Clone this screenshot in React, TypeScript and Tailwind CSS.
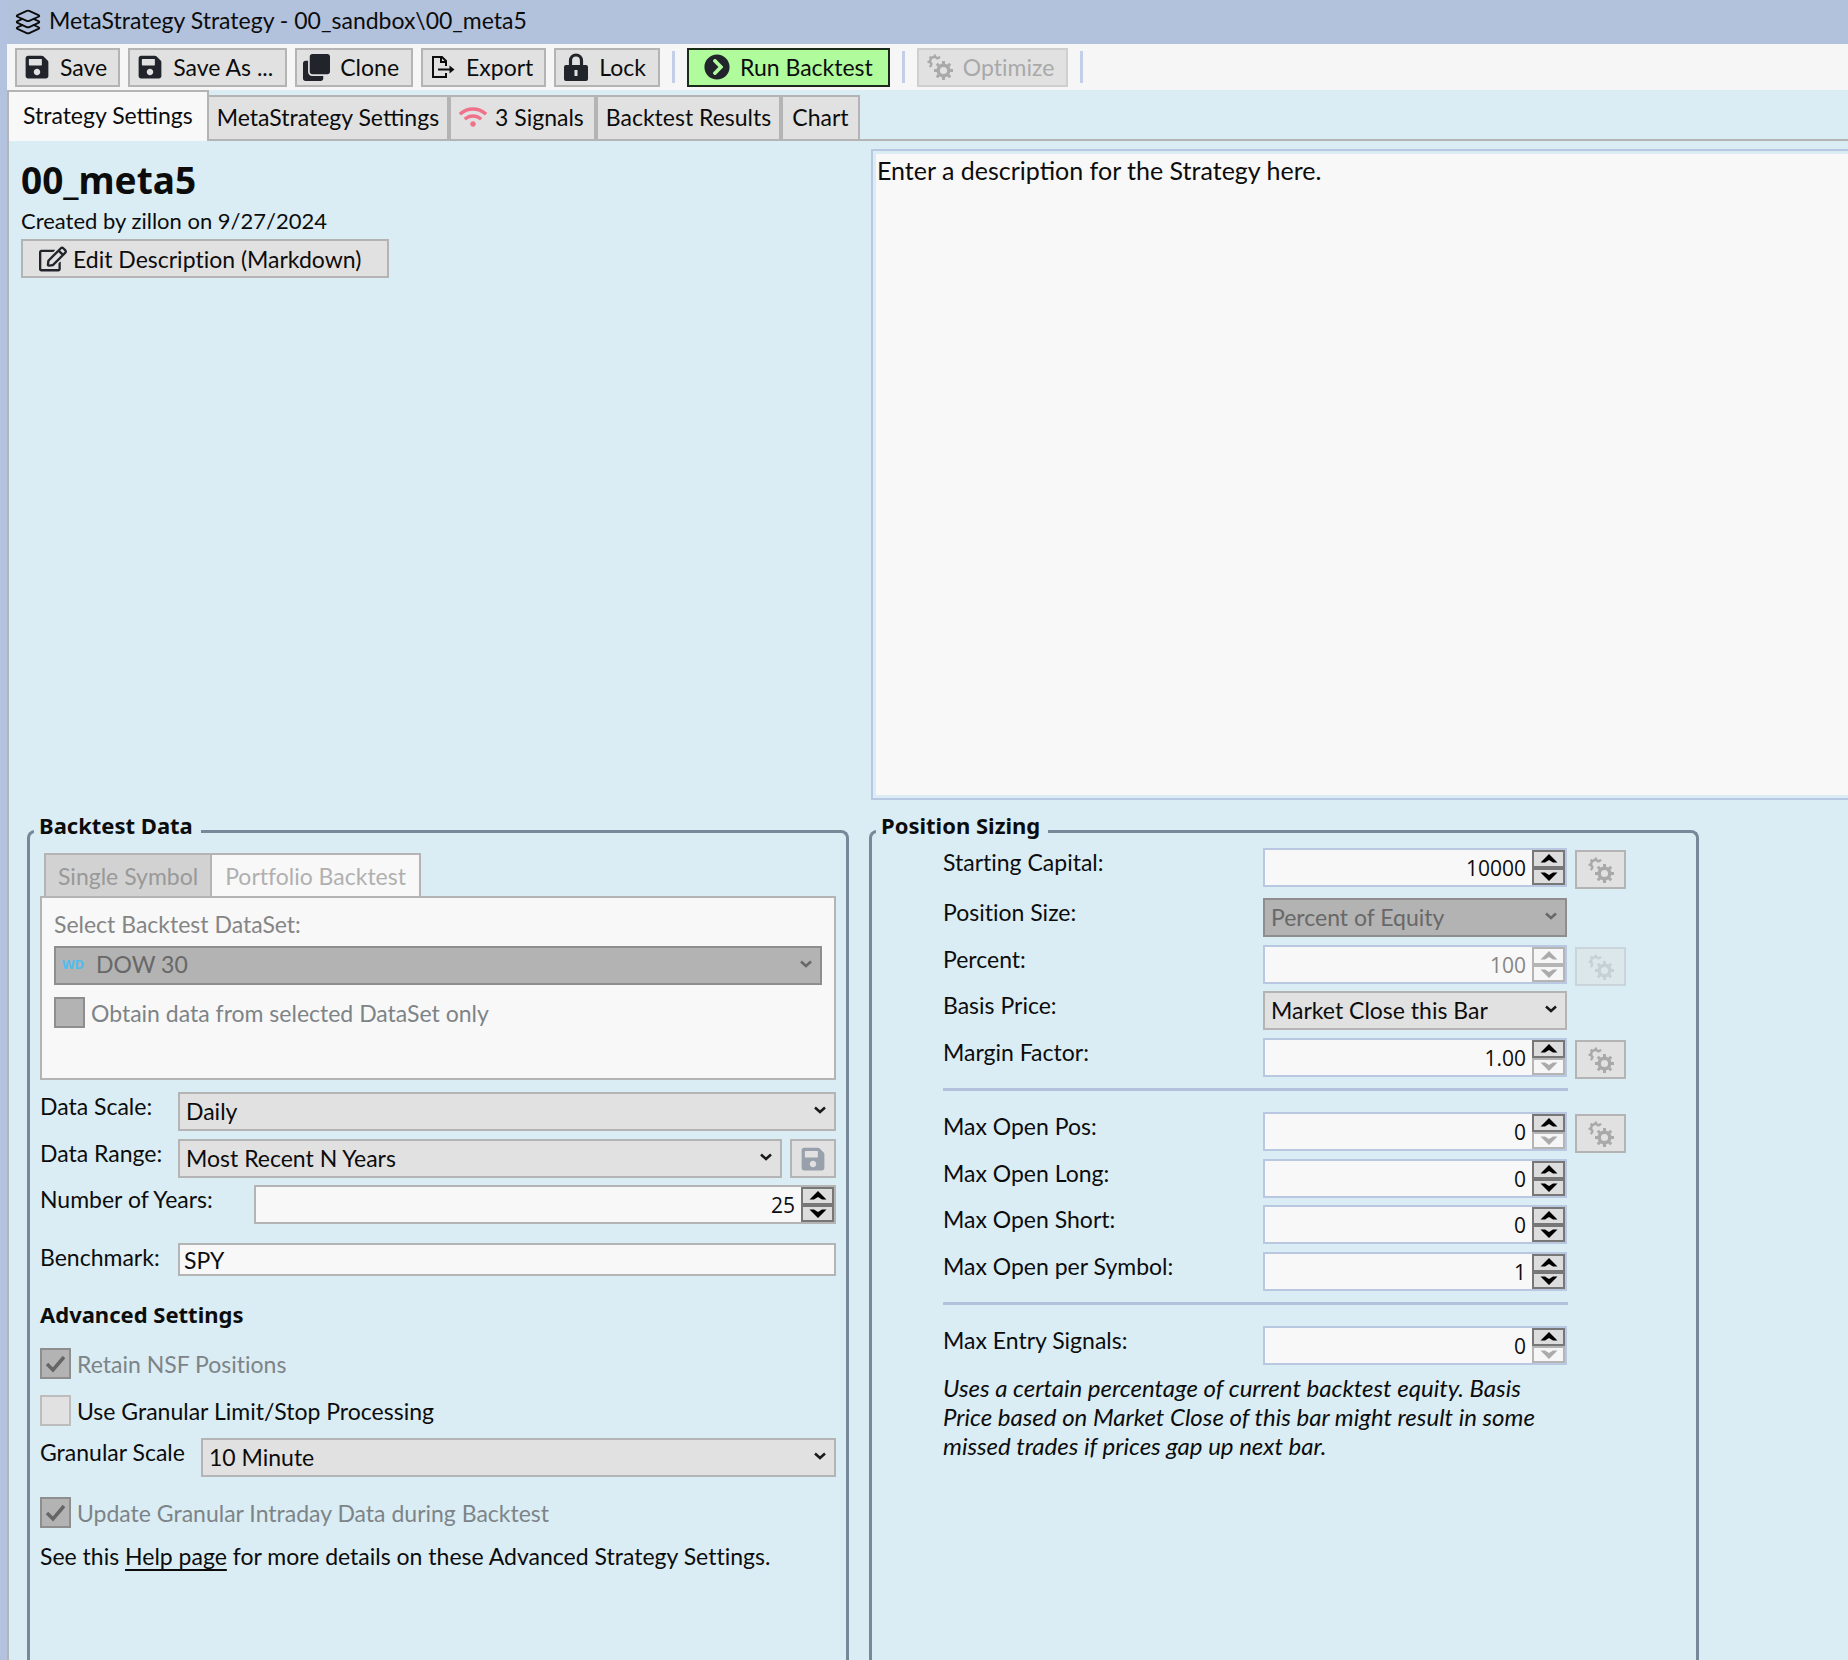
import React, { useId, useState } from "react";
import { FaSave, FaClone, FaChevronCircleRight, FaWifi, FaRegEdit } from "react-icons/fa";
import { IoLayersOutline } from "react-icons/io5";

function ExportIcon() {
  return (
    <svg viewBox="0 0 24 24" className="h-6 w-6" fill="none" stroke="currentColor" strokeWidth="2" aria-hidden="true">
      <path d="M15 18v4H2V2h9l4 4v5" />
      <path d="M10 2v5h5" />
      <path d="M7 14.500h13" />
      <path d="M18.500 10.500v8l5-4z" fill="currentColor" stroke="none" />
    </svg>
  );
}

function LockIcon() {
  return (
    <svg viewBox="0 0 24 28" className="h-7 w-6 text-[#21252b]" aria-hidden="true">
      <path d="M6.500 13V7.500a5.500 5.500 0 0 1 11 0V13" fill="none" stroke="currentColor" strokeWidth="3.200" />
      <path
        d="M2 12h20a2 2 0 0 1 2 2v12a2 2 0 0 1-2 2H2a2 2 0 0 1-2-2V14a2 2 0 0 1 2-2zm8.500 5v6h3v-6z"
        fill="currentColor"
        fillRule="evenodd"
      />
    </svg>
  );
}

const TEETH = [0, 45, 90, 135, 180, 225, 270, 315];

function GearsIcon() {
  return (
    <svg viewBox="0 0 26 26" className="h-[26px] w-[26px]" fill="none" stroke="currentColor" aria-hidden="true">
      <circle cx="16.500" cy="16.500" r="5.300" strokeWidth="3.400" />
      {TEETH.map((angle) => (
        <path key={angle} d="M16.500 10.500V7" strokeWidth="3" transform={`rotate(${angle} 16.500 16.500)`} />
      ))}
      <path d="M5.200 10.800A4.200 4.200 0 1 1 11 5.200" strokeWidth="2.600" />
      {[-90, -135, -45, 0, 45].map((angle) => (
        <path key={angle} d="M7.800 3.500V.5" strokeWidth="2.200" transform={`rotate(${angle} 7.800 7.800)`} />
      ))}
    </svg>
  );
}

function Chevron() {
  return (
    <svg viewBox="0 0 12 8" className="h-2 w-3" fill="none" stroke="currentColor" strokeWidth="2.500" aria-hidden="true">
      <path d="M1 1.500L6 6l5-4.500" />
    </svg>
  );
}

function ToolButton({ children, className, disabled }: { children: React.ReactNode; className: string; disabled?: boolean }) {
  return (
    <button type="button" disabled={disabled} className={`flex h-[39px] shrink-0 items-center border-2 ${className}`}>
      {children}
    </button>
  );
}

const plain = "border-[#b4b4b4] bg-[#e1e1e1]";

function Divider() {
  return <div className="mx-3 h-8 w-[3px] shrink-0 bg-[#c3cfe6]" />;
}

function Select({ id, value, disabled, icon }: { id: string; value: string; disabled?: boolean; icon?: React.ReactNode }) {
  return (
    <div className="relative min-w-0 flex-1">
      {icon && <span className="pointer-events-none absolute left-2 top-0 flex h-[36px] items-center">{icon}</span>}
      <select
        id={id}
        disabled={disabled}
        defaultValue={value}
        className={`block h-[39px] w-full appearance-none border-2 pr-8 opacity-100 ${icon ? "pb-1 pl-10" : "pb-0.5 pl-1.5"} ${
          disabled ? "border-[#8e8e8e] bg-[#b3b3b3] text-[#686868]" : "border-[#b4b4b4] bg-[#e1e1e1] text-[#0c0c0c]"
        }`}
      >
        <option>{value}</option>
      </select>
      <span
        className={`pointer-events-none absolute right-2.5 top-0 flex h-[36px] items-center ${
          disabled ? "text-[#686868]" : "text-[#1a1a1a]"
        }`}
      >
        <Chevron />
      </span>
    </div>
  );
}

function SpinButton({ up, off, label, onClick }: { up?: boolean; off?: boolean; label: string; onClick: () => void }) {
  return (
    <button
      type="button"
      aria-label={label}
      disabled={off}
      onClick={onClick}
      className={`flex min-h-0 flex-1 items-center justify-center border-2 ${
        off ? "border-[#b5b5b5] bg-[#f6f6f6] text-[#ababab]" : "border-[#777777] bg-[#dddddd] text-black"
      }`}
    >
      <svg viewBox="0 0 18 9" className="h-[9px] w-[18px]" fill="currentColor" aria-hidden="true">
        {up ? <path d="M9 0L17.500 8.500H13L9 6 5 8.500H.5z" /> : <path d="M9 9L17.500 .5H13L9 3 5 .5H.5z" />}
      </svg>
    </button>
  );
}

type SpinnerProps = { id: string; value: string; tone?: "blue" | "gray"; noUp?: boolean; noDown?: boolean };

function Spinner({ id, value, tone = "blue", noUp, noDown }: SpinnerProps) {
  const [text, setText] = useState(value);
  const step = (delta: number) => setText((t) => String(Number(t) + delta));
  const disabled = noUp && noDown;
  return (
    <div
      className={`flex h-[39px] min-w-0 flex-1 border-2 bg-[#f8f8f8] ${tone === "blue" ? "border-[#b9c7e1]" : "border-[#b4b4b4]"}`}
    >
      <input
        id={id}
        value={text}
        disabled={disabled}
        onChange={(e) => setText(e.target.value)}
        inputMode="decimal"
        className={`min-w-0 flex-1 pr-1.5 text-right font-['Open_Sans',sans-serif] text-[21px] ${
          disabled ? "text-[#868686]" : "text-[#0c0c0c]"
        }`}
      />
      <div className="flex w-[33px] flex-col">
        <SpinButton up off={noUp} label="Increase" onClick={() => step(1)} />
        <SpinButton off={noDown} label="Decrease" onClick={() => step(-1)} />
      </div>
    </div>
  );
}

function GroupBox({ title, className, children }: { title: string; className: string; children: React.ReactNode }) {
  return (
    <fieldset className="min-w-0 rounded-t-lg border-[3px] border-b-0 border-[#778899]">
      <legend className="ml-1 pb-[13px] pl-[5px] pr-2 font-['Noto_Sans',sans-serif] text-[22px] font-bold leading-5">{title}</legend>
      <div className={className}>{children}</div>
    </fieldset>
  );
}

function CheckRow({ label, checked, disabled, className }: { label: string; checked?: boolean; disabled?: boolean; className: string }) {
  const id = useId();
  return (
    <div className={`flex items-center gap-1.5 ${className}`}>
      <div className="relative h-[31px] w-[31px] shrink-0">
        <input
          id={id}
          type="checkbox"
          defaultChecked={checked}
          disabled={disabled}
          className={`peer block h-[31px] w-[31px] appearance-none border-2 ${
            disabled ? "border-[#8e8e8e] bg-[#b3b3b3]" : "border-[#bdbdbd] bg-[#e1e1e1]"
          }`}
        />
        <svg
          viewBox="0 0 31 31"
          className="pointer-events-none absolute inset-0 hidden text-[#666666] peer-checked:block"
          fill="none"
          stroke="currentColor"
          strokeWidth="3.500"
          aria-hidden="true"
        >
          <path d="M7 16l6 6L24 9" />
        </svg>
      </div>
      <label htmlFor={id} className={disabled ? "text-[#7d8487]" : ""}>
        {label}
      </label>
    </div>
  );
}

function SizingRow({
  label,
  className = "h-[47px]",
  gear,
  children,
}: {
  label: string;
  className?: string;
  gear?: "on" | "faded";
  children: (id: string) => React.ReactNode;
}) {
  const id = useId();
  return (
    <div className={`flex items-start ${className}`}>
      <label htmlFor={id} className="w-[320px] shrink-0">
        {label}
      </label>
      {children(id)}
      <div className="ml-2 w-[51px] shrink-0 pt-0.5">
        {gear && (
          <button
            type="button"
            disabled
            aria-label={`Optimize ${label}`}
            className={`flex h-[39px] w-[51px] items-center justify-center border-2 border-[#b4b4b4] bg-[#e1e1e1] text-[#a9a9a9] ${
              gear === "faded" ? "opacity-40" : ""
            }`}
          >
            <GearsIcon />
          </button>
        )}
      </div>
    </div>
  );
}

function Rule() {
  return <hr className="mr-[58px] h-[3px] border-0 bg-[#b3c1dd]" />;
}

const tab = "flex h-[44px] items-center border-2 border-b-0 border-[#b4b4b4] bg-[#e1e1e1] pb-0.5";

export default function App() {
  return (
    <div className="flex min-h-screen flex-col border-l-[7px] border-[#b3c3df] bg-[#daecf4] font-['Lato','Noto_Sans',sans-serif] text-[23px] leading-7 text-[#0c0c0c] [font-variant-ligatures:none]">
      <header className="flex h-[44px] items-center bg-[#b2c2dc] pl-1.5">
        <IoLayersOutline className="h-[30px] w-[30px]" />
        <h1 className="ml-1.5 pb-1">MetaStrategy Strategy - 00_sandbox\00_meta5</h1>
      </header>

      <div className="flex h-[46px] items-center bg-[#f6f6f6] pl-2">
        <div className="flex gap-2">
          <ToolButton className={`${plain} gap-[11px] pl-2 pr-[11px]`}>
            <FaSave className="h-[26px] w-6 text-[#21252b]" />
            Save
          </ToolButton>
          <ToolButton className={`${plain} gap-[11px] pl-2 pr-3`}>
            <FaSave className="h-[26px] w-6 text-[#21252b]" />
            Save As ...
          </ToolButton>
          <ToolButton className={`${plain} gap-2.5 pl-1.5 pr-3`}>
            <FaClone className="h-[27px] w-[27px] text-[#21252b]" />
            Clone
          </ToolButton>
          <ToolButton className={`${plain} gap-[11px] pl-2 pr-[11px]`}>
            <ExportIcon />
            Export
          </ToolButton>
          <ToolButton className={`${plain} gap-[11px] pl-2 pr-3`}>
            <LockIcon />
            Lock
          </ToolButton>
        </div>
        <Divider />
        <ToolButton className="gap-2.5 border-[#1c2a1c] bg-[#b0fb9c] px-[15px]">
          <FaChevronCircleRight className="h-[26px] w-[26px] text-[#21252b]" />
          Run Backtest
        </ToolButton>
        <Divider />
        <ToolButton disabled className="gap-2.5 border-[#cfcfcf] bg-[#e1e1e1] pl-2 pr-3 text-[#a9a9a9]">
          <GearsIcon />
          Optimize
        </ToolButton>
        <Divider />
      </div>

      <nav role="tablist" className="flex h-[51px] items-end border-b-2 border-[#b4b4b4]">
        <button
          type="button"
          role="tab"
          aria-selected="true"
          className="-mb-0.5 flex h-[51px] items-center border-2 border-b-0 border-[#b4b4b4] bg-[#f8f8f8] px-3.5 pb-1 [font-variant-ligatures:normal]"
        >
          Strategy Settings
        </button>
        <button type="button" role="tab" aria-selected="false" className={`${tab} -ml-0.5 px-2 [font-variant-ligatures:normal]`}>
          MetaStrategy Settings
        </button>
        <button type="button" role="tab" aria-selected="false" className={`${tab} gap-2 pl-2 pr-2.5`}>
          <FaWifi className="h-7 w-7 text-[#f0728a]" />3 Signals
        </button>
        <button type="button" role="tab" aria-selected="false" className={`${tab} px-2`}>
          Backtest Results
        </button>
        <button type="button" role="tab" aria-selected="false" className={`${tab} px-[9px]`}>
          Chart
        </button>
      </nav>

      <main className="flex flex-1 flex-col border-l-2 border-[#b4b4b4]">
        <div className="grid grid-cols-[822fr_979fr] gap-x-5 pl-[18px] pt-2">
          <section className="-ml-1.5 pt-2">
            <h2 className="font-['Noto_Sans',sans-serif] text-[37px] font-bold leading-[46px]">00_meta5</h2>
            <p className="pb-1 pt-1 text-[22px]">Created by zillon on 9/27/2024</p>
            <button type="button" className={`${plain} flex h-[39px] items-center gap-1.5 border-2 pl-4 pr-[26px]`}>
              <FaRegEdit className="h-7 w-7 text-[#21252b]" />
              Edit Description (Markdown)
            </button>
          </section>
          <div className="ml-0.5 flex min-h-[651px] border-2 border-r-0 border-[#b8c8e2] p-[3px] pr-0">
            <textarea
              aria-label="Strategy description"
              defaultValue="Enter a description for the Strategy here."
              className="w-full resize-none bg-[#f8f8f8] pl-px pt-0.5 text-[25px] [font-variant-ligatures:normal]"
            />
          </div>
        </div>

        <div className="mt-[15px] grid flex-1 grid-cols-[822fr_830fr_129fr] gap-x-5 pl-[18px]">
          <GroupBox title="Backtest Data" className="px-2.5 pt-[5px]">
            <div role="tablist" className="flex pl-1">
              <button
                type="button"
                role="tab"
                aria-selected="false"
                disabled
                className="flex h-[43px] items-center border-2 border-b-0 border-[#b4b4b4] bg-[#d2d2d2] px-3 text-[#999999]"
              >
                Single Symbol
              </button>
              <button
                type="button"
                role="tab"
                aria-selected="true"
                disabled
                className="-ml-0.5 flex h-[43px] items-center border-2 border-b-0 border-[#b4b4b4] bg-[#f8f8f8] px-[13px] text-[#b0b0b0]"
              >
                Portfolio Backtest
              </button>
            </div>
            <div className="border-2 border-[#b4b4b4] bg-[#f8f8f8] px-3 pb-[50px] pt-3 text-[#858585]">
              <label htmlFor="dataset">Select Backtest DataSet:</label>
              <div className="mt-2 flex">
                <Select
                  id="dataset"
                  value="DOW 30"
                  disabled
                  icon={<span className="font-['Noto_Sans',sans-serif] text-[13px] font-bold leading-4 text-[#4fbdf0]">WD</span>}
                />
              </div>
              <CheckRow label="Obtain data from selected DataSet only" disabled className="mt-3" />
            </div>
            <div className="mt-3 flex h-[47px] items-start">
              <label htmlFor="scale" className="w-[138px] shrink-0">Data Scale:</label>
              <Select id="scale" value="Daily" />
            </div>
            <div className="flex h-[46px] items-start">
              <label htmlFor="range" className="w-[138px] shrink-0">Data Range:</label>
              <Select id="range" value="Most Recent N Years" />
              <button type="button" aria-label="Save range" className={`${plain} ml-2 flex h-[39px] w-[46px] items-center justify-center border-2`}>
                <FaSave className="h-[26px] w-6 text-[#98a1ab]" />
              </button>
            </div>
            <div className="flex h-[58px] items-start">
              <label htmlFor="years" className="w-[214px] shrink-0">Number of Years:</label>
              <Spinner id="years" value="25" tone="gray" />
            </div>
            <div className="flex items-start">
              <label htmlFor="benchmark" className="w-[138px] shrink-0">Benchmark:</label>
              <input id="benchmark" defaultValue="SPY" className="h-[33px] min-w-0 flex-1 border-2 border-[#b4b4b4] bg-[#f8f8f8] pl-1" />
            </div>
            <h3 className="mt-6 font-['Noto_Sans',sans-serif] text-[22px] font-bold">Advanced Settings</h3>
            <CheckRow label="Retain NSF Positions" checked disabled className="mt-5" />
            <CheckRow label="Use Granular Limit/Stop Processing" className="mt-4" />
            <div className="mt-3 flex items-start">
              <label htmlFor="granular" className="w-[161px] shrink-0">Granular Scale</label>
              <Select id="granular" value="10 Minute" />
            </div>
            <CheckRow label="Update Granular Intraday Data during Backtest" checked disabled className="mt-5" />
            <p className="mt-3.5">
              See this{" "}
              <a href="#help" className="underline decoration-2 underline-offset-4">
                Help page
              </a>{" "}
              for more details on these Advanced Strategy Settings.
            </p>
          </GroupBox>

          <GroupBox title="Position Sizing" className="pl-[71px] pr-[70px]">
            <SizingRow label="Starting Capital:" className="h-[50px]" gear="on">
              {(id) => <Spinner id={id} value="10000" />}
            </SizingRow>
            <SizingRow label="Position Size:">{(id) => <Select id={id} value="Percent of Equity" disabled />}</SizingRow>
            <SizingRow label="Percent:" className="h-[46px]" gear="faded">
              {(id) => <Spinner id={id} value="100" noUp noDown />}
            </SizingRow>
            <SizingRow label="Basis Price:">{(id) => <Select id={id} value="Market Close this Bar" />}</SizingRow>
            <SizingRow label="Margin Factor:" className="h-[50px]" gear="on">
              {(id) => <Spinner id={id} value="1.00" noDown />}
            </SizingRow>
            <Rule />
            <div className="h-[21px]" />
            <SizingRow label="Max Open Pos:" gear="on">
              {(id) => <Spinner id={id} value="0" noDown />}
            </SizingRow>
            <SizingRow label="Max Open Long:" className="h-[46px]">
              {(id) => <Spinner id={id} value="0" />}
            </SizingRow>
            <SizingRow label="Max Open Short:">{(id) => <Spinner id={id} value="0" />}</SizingRow>
            <SizingRow label="Max Open per Symbol:" className="h-[50px]">
              {(id) => <Spinner id={id} value="1" />}
            </SizingRow>
            <Rule />
            <div className="h-[21px]" />
            <SizingRow label="Max Entry Signals:">{(id) => <Spinner id={id} value="0" noDown />}</SizingRow>
            <p className="mr-[58px] text-[24px] italic leading-[29px]">
              Uses a certain percentage of current backtest equity. Basis Price based on Market Close of this bar might result in some
              missed trades if prices gap up next bar.
            </p>
          </GroupBox>
        </div>
      </main>
    </div>
  );
}
